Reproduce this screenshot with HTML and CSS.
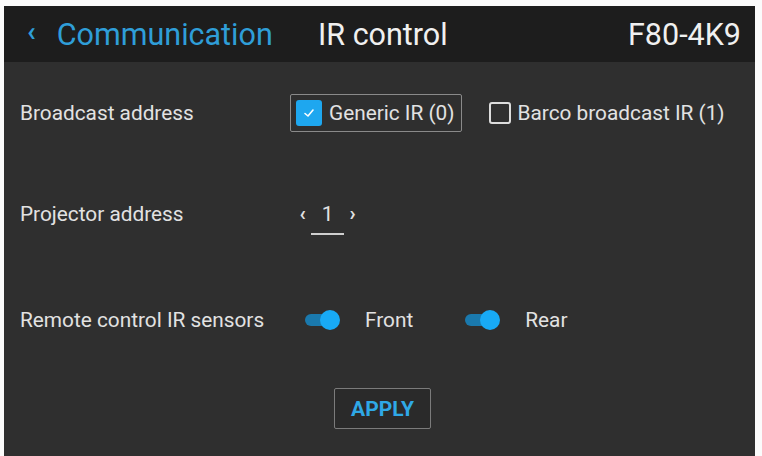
FILE: index.html
```html
<!DOCTYPE html>
<html>
<head>
<meta charset="utf-8">
<link rel="stylesheet" href="styles.css">
</head>
<body>
<div class="screen">
  <header class="header">
    <div class="back"><span class="chev">‹</span><span>Communication</span></div>
    <div class="title">IR control</div>
    <div class="model">F80-4K9</div>
  </header>
  <main class="content">
    <div class="row row1">
      <div class="label">Broadcast address</div>
      <div class="opts">
        <div class="opt focused">
          <span class="box checked"><svg width="14" height="14" viewBox="0 0 14 14"><path d="M3 7.5 L6 10 L11 4" fill="none" stroke="#fff" stroke-width="1.6" stroke-linecap="round" stroke-linejoin="round"/></svg></span>
          <span>Generic IR (0)</span>
        </div>
        <div class="opt">
          <span class="box"></span>
          <span>Barco broadcast IR (1)</span>
        </div>
      </div>
    </div>
    <div class="row row2">
      <div class="label">Projector address</div>
      <div class="stepper">
        <span class="arr">‹</span>
        <span class="val">1</span>
        <span class="arr">›</span>
      </div>
    </div>
    <div class="row row3">
      <div class="label">Remote control IR sensors</div>
      <div class="toggles">
        <div class="tog"><span class="switch"><span class="knob"></span></span><span>Front</span></div>
        <div class="tog"><span class="switch"><span class="knob"></span></span><span>Rear</span></div>
      </div>
    </div>
    <div class="actions">
      <button class="apply">APPLY</button>
    </div>
  </main>
</div>
</body>
</html>
```
FILE: styles.css
```css
html, body { margin: 0; padding: 0; background: #fbfbfb; }
body { width: 762px; height: 456px; overflow: hidden; font-family: Roboto, "Liberation Sans", sans-serif; }
.screen {
  margin: 6px 7px 0 4px;
  height: 450px;
  background: #2f2f2f;
  display: flex;
  flex-direction: column;
}
.header {
  height: 56px;
  background: #1d1d1d;
  display: flex;
  align-items: center;
  padding: 0 14px 0 23px;
  font-size: 30.5px;
  color: #f0f0f0;
}
.back { color: #2f9ed8; display: flex; align-items: center; width: 291px; }
.chev { font-size: 28px; font-weight: bold; margin-right: 21px; position: relative; top: -3px; }
.title { flex: 1; }
.content { flex: 1; padding: 0 0 0 16px; color: #e2e2e2; font-size: 20.8px; }
.row { display: flex; align-items: center; }
.label { width: 270px; }
.row1 { height: 40px; margin-top: 31px; }
.opts { display: flex; align-items: center; gap: 26px; }
.opt { display: flex; align-items: center; gap: 7px; height: 36px; padding: 0 6px 0 5px; border: 1px solid transparent; }
.opt.focused { border-color: #8a8a8a; border-radius: 2px; }
.box { width: 22px; height: 22px; border: 2px solid #dcdcdc; border-radius: 3px; display: flex; align-items: center; justify-content: center; box-sizing: border-box; }
.box.checked { width: 26px; height: 26px; background: #1ea7ef; border: none; }
.opt:not(.focused) { padding-left: 0; }
.row2 { height: 40px; margin-top: 61px; }
.stepper { display: flex; align-items: center; margin-left: 4px; gap: 0; }
.arr { width: 17px; text-align: center; font-size: 20px; font-weight: bold; position: relative; top: -1px; }
.val { width: 33px; text-align: center; position: relative; }
.val::after { content: ""; position: absolute; left: 0; right: 0; bottom: -9px; height: 2px; background: #cfcfcf; }
.row3 { height: 40px; margin-top: 66px; }
.toggles { display: flex; align-items: center; gap: 52px; margin-left: 15px; }
.tog { display: flex; align-items: center; gap: 26px; }
.switch { width: 34px; height: 12px; border-radius: 6px; background: #1a79ad; position: relative; }
.knob { position: absolute; right: -1px; top: -4px; width: 20px; height: 20px; border-radius: 50%; background: #18aaf5; }
.actions { display: flex; justify-content: center; margin-top: 48px; padding-right: 16px; }
.apply {
  width: 97px; height: 41px;
  margin-left: 6px;
  background: #2a2a2a;
  border: 1px solid #7b7b7b;
  border-radius: 2px;
  color: #2fa8e6;
  font-family: Roboto, "Liberation Sans", sans-serif;
  font-weight: bold;
  font-size: 21px;
}
```
